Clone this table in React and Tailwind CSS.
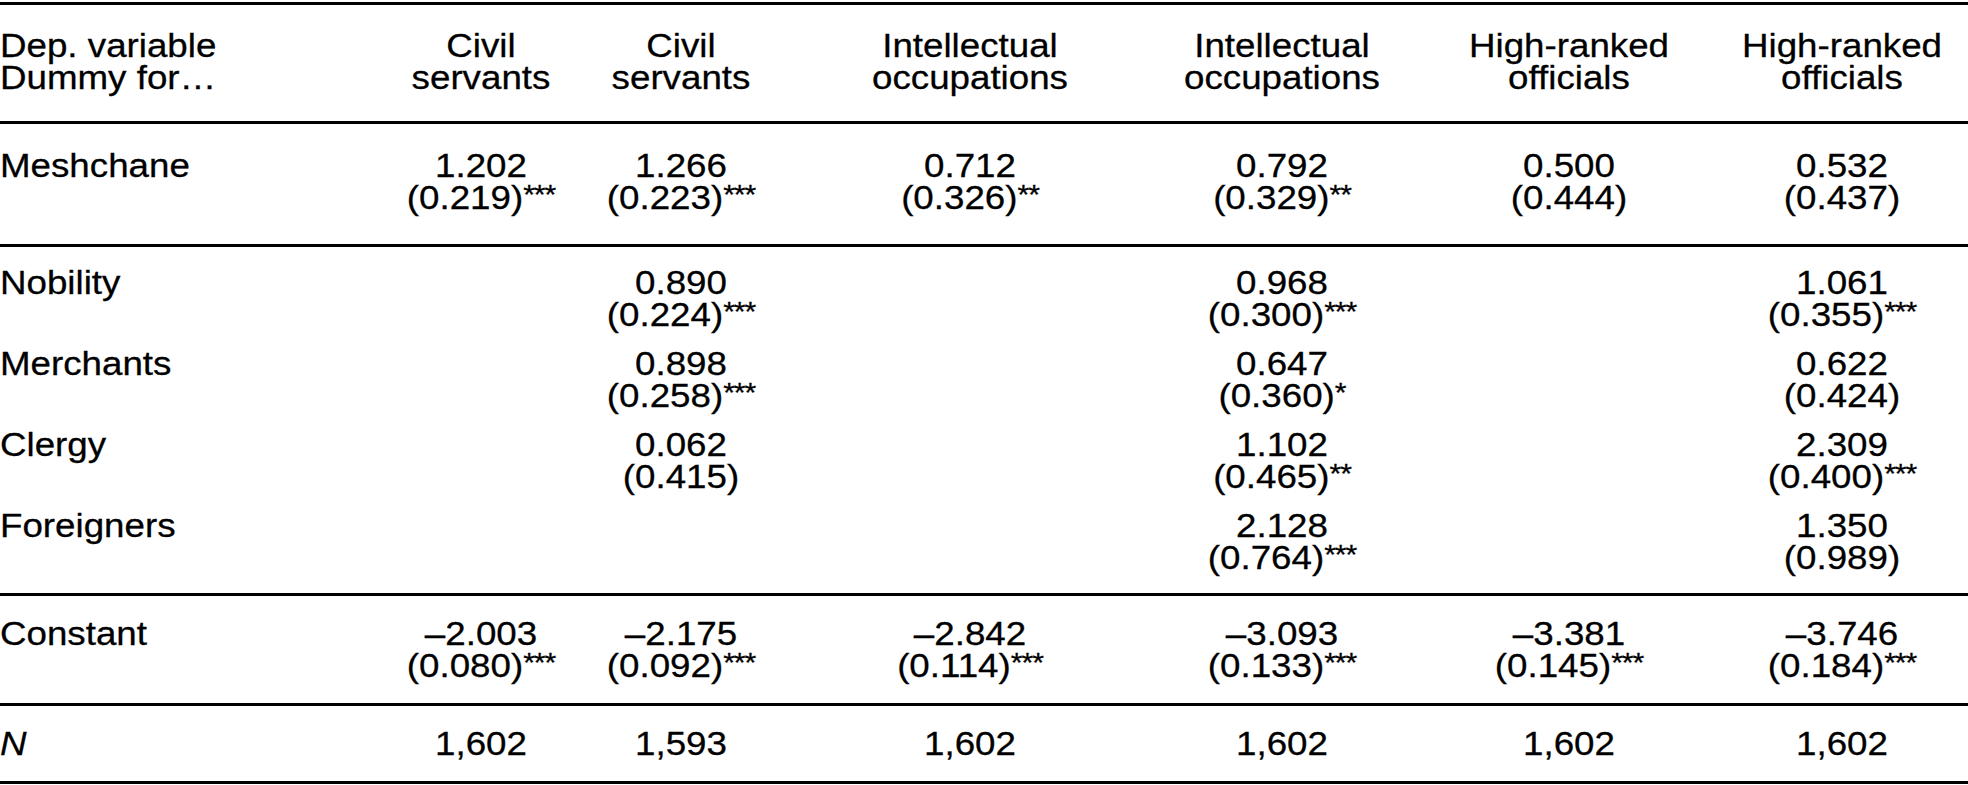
const cols = "grid grid-cols-[380px_202px_198px_380px_244px_330px_216px]";

const header = [
  ["Civil", "servants"],
  ["Civil", "servants"],
  ["Intellectual", "occupations"],
  ["Intellectual", "occupations"],
  ["High-ranked", "officials"],
  ["High-ranked", "officials"],
];

const meshchane = [
  ["1.202", "(0.219)", "***"],
  ["1.266", "(0.223)", "***"],
  ["0.712", "(0.326)", "**"],
  ["0.792", "(0.329)", "**"],
  ["0.500", "(0.444)", ""],
  ["0.532", "(0.437)", ""],
];

const controls = [
  {
    label: "Nobility",
    cells: [null, ["0.890", "(0.224)", "***"], null, ["0.968", "(0.300)", "***"], null, ["1.061", "(0.355)", "***"]],
  },
  {
    label: "Merchants",
    cells: [null, ["0.898", "(0.258)", "***"], null, ["0.647", "(0.360)", "*"], null, ["0.622", "(0.424)", ""]],
  },
  {
    label: "Clergy",
    cells: [null, ["0.062", "(0.415)", ""], null, ["1.102", "(0.465)", "**"], null, ["2.309", "(0.400)", "***"]],
  },
  {
    label: "Foreigners",
    cells: [null, null, null, ["2.128", "(0.764)", "***"], null, ["1.350", "(0.989)", ""]],
  },
];

const constant = [
  ["–2.003", "(0.080)", "***"],
  ["–2.175", "(0.092)", "***"],
  ["–2.842", "(0.114)", "***"],
  ["–3.093", "(0.133)", "***"],
  ["–3.381", "(0.145)", "***"],
  ["–3.746", "(0.184)", "***"],
];

const counts = ["1,602", "1,593", "1,602", "1,602", "1,602", "1,602"];

// the source face is set a little wide, so stretch each cell
const wide = "scale-x-[1.08]";
const labelCls = `${wide} origin-left`;
const numCls = `${wide} text-center`;

function Stars({ s }) {
  if (!s) return null;
  return <span className="relative -top-[5px] text-[28px] tracking-[-1px]">{s}</span>;
}

function Estimate({ v }) {
  if (!v) return <div />;
  return (
    <div className={numCls}>
      <div>{v[0]}</div>
      <div>
        {v[1]}
        <Stars s={v[2]} />
      </div>
    </div>
  );
}

function Row({ label, cells }) {
  return (
    <div className={cols}>
      <div className={labelCls}>{label}</div>
      {cells.map((c, i) => (
        <Estimate key={i} v={c} />
      ))}
    </div>
  );
}

export default function App() {
  return (
    <div className="w-[1968px] h-[785px] bg-white text-black pt-[2px] font-['Liberation_Sans',Arial,sans-serif] text-[34px] leading-[32px] [-webkit-text-stroke:0.3px_black]">
      {/* header */}
      <div className="border-t-[3px] border-black h-[119px] pt-[24px]">
        <div className={cols}>
          <div className={labelCls}>
            <div>Dep. variable</div>
            <div>Dummy for…</div>
          </div>
          {header.map((h, i) => (
            <div key={i} className={numCls}>
              <div>{h[0]}</div>
              <div>{h[1]}</div>
            </div>
          ))}
        </div>
      </div>

      <div className="border-t-[3px] border-black h-[123px] pt-[25px]">
        <Row label="Meshchane" cells={meshchane} />
      </div>

      {/* status controls */}
      <div className="border-t-[3px] border-black h-[349px] pt-[19px] flex flex-col gap-[14px]">
        {controls.map((r) => (
          <Row key={r.label} label={r.label} cells={r.cells} />
        ))}
      </div>

      <div className="border-t-[3px] border-black h-[110px] pt-[21px]">
        <Row label="Constant" cells={constant} />
      </div>

      <div className="border-y-[3px] border-black h-[81px] pt-[21px]">
        <div className={cols}>
          <div className={`${labelCls} italic`}>N</div>
          {counts.map((n, i) => (
            <div key={i} className={numCls}>
              {n}
            </div>
          ))}
        </div>
      </div>
    </div>
  );
}
